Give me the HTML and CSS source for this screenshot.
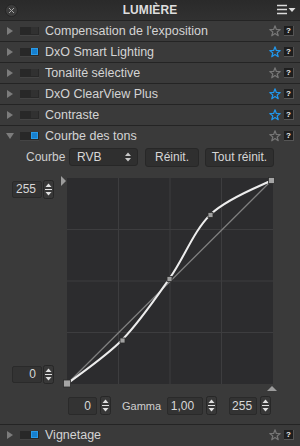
FILE: index.html
```html
<!DOCTYPE html>
<html lang="fr">
<head>
    <meta charset="UTF-8">
    <title>Lumière</title>
    <link rel="stylesheet" href="styles.css">
</head>
<body>
    <svg class="defs" width="0" height="0">
        <symbol id="star" viewBox="0 0 12 12">
            <polygon points="6,0.8 7.35,4.44 11.23,4.6 8.19,7.01 9.23,10.75 6,8.6 2.77,10.75 3.81,7.01 0.77,4.6 4.65,4.44" fill="none" stroke="currentColor" stroke-width="1.2" stroke-linejoin="round"/>
        </symbol>
        <symbol id="step" viewBox="0 0 11 19">
            <rect x="0.5" y="0.5" width="10" height="18" rx="2" fill="#383838" stroke="#272727"/>
            <polygon points="5.5,3.5 8.5,7 2.5,7" fill="#e0e0e0"/>
            <line x1="2" y1="9.5" x2="9" y2="9.5" stroke="#e0e0e0"/>
            <polygon points="2.5,12 8.5,12 5.5,15.5" fill="#e0e0e0"/>
        </symbol>
    </svg>

    <div class="panel">
        <div class="title-bar">
            <span class="close">
                <svg width="13" height="13" viewBox="0 0 13 13">
                    <circle cx="6.5" cy="6.5" r="6" fill="#3c3c3c" stroke="#262626"/>
                    <path d="M4 4 L9 9 M9 4 L4 9" stroke="#a8a8a8" stroke-width="1"/>
                </svg>
            </span>
            <h1>LUMIÈRE</h1>
            <span class="menu">
                <svg width="19" height="12" viewBox="0 0 19 12">
                    <path d="M0 1.5 H10 M0 5.5 H10 M0 9.5 H10" stroke="#dcdcdc" stroke-width="1.3"/>
                    <polygon points="11.5,4 18.5,4 15,8" fill="#dcdcdc"/>
                </svg>
            </span>
        </div>

        <div class="row">
            <span class="arrow"></span>
            <span class="toggle"><i></i></span>
            <span class="label">Compensation de l'exposition</span>
            <svg class="star"><use href="#star"/></svg>
            <span class="help">?</span>
        </div>
        <div class="row">
            <span class="arrow"></span>
            <span class="toggle on"><i></i></span>
            <span class="label">DxO Smart Lighting</span>
            <svg class="star fav"><use href="#star"/></svg>
            <span class="help">?</span>
        </div>
        <div class="row">
            <span class="arrow"></span>
            <span class="toggle"><i></i></span>
            <span class="label">Tonalité sélective</span>
            <svg class="star"><use href="#star"/></svg>
            <span class="help">?</span>
        </div>
        <div class="row">
            <span class="arrow"></span>
            <span class="toggle"><i></i></span>
            <span class="label">DxO ClearView Plus</span>
            <svg class="star fav"><use href="#star"/></svg>
            <span class="help">?</span>
        </div>
        <div class="row">
            <span class="arrow"></span>
            <span class="toggle"><i></i></span>
            <span class="label">Contraste</span>
            <svg class="star fav"><use href="#star"/></svg>
            <span class="help">?</span>
        </div>
        <div class="row">
            <span class="arrow open"></span>
            <span class="toggle on"><i></i></span>
            <span class="label">Courbe des tons</span>
            <svg class="star"><use href="#star"/></svg>
            <span class="help">?</span>
        </div>

        <div class="section">
            <div class="controls">
                <span class="ctl-label">Courbe</span>
                <div class="select">
                    <span>RVB</span>
                    <svg width="6" height="10" viewBox="0 0 6 10">
                        <polygon points="3,0.5 6,4 0,4" fill="#c8c8c8"/>
                        <polygon points="0,6 6,6 3,9.5" fill="#c8c8c8"/>
                    </svg>
                </div>
                <button class="btn reset">Réinit.</button>
                <button class="btn reset-all">Tout réinit.</button>
            </div>

            <div class="curve-body">
                <div class="side">
                    <div class="spin">
                        <span class="num">255</span>
                        <svg class="stepper"><use href="#step"/></svg>
                    </div>
                    <div class="spin">
                        <span class="num">0</span>
                        <svg class="stepper"><use href="#step"/></svg>
                    </div>
                </div>
                <div class="graph">
                    <svg class="curve" width="206" height="206" viewBox="0 0 206 206">
                        <path d="M51.5 0 V206 M103 0 V206 M154.5 0 V206 M0 51.5 H206 M0 103 H206 M0 154.5 H206" stroke="#3d3d3f" stroke-width="1"/>
                        <line x1="0" y1="206" x2="204.5" y2="2.5" stroke="#808080" stroke-width="1.2"/>
                        <path d="M0 206 C9.2 198.5 37.9 179.4 55 162 C72.1 144.6 87.8 121.4 102.5 100.5 C117.3 79.6 126.6 52.9 143.5 36.5 C160.4 20.1 193.9 7.8 204.5 2.5" fill="none" stroke="#ededed" stroke-width="2"/>
                        <rect x="53" y="160" width="5" height="5" fill="#a0a0a0" stroke="#2a2a2a" stroke-width="0.8"/>
                        <rect x="100" y="98.5" width="5" height="5" fill="#a0a0a0" stroke="#2a2a2a" stroke-width="0.8"/>
                        <rect x="141" y="34.5" width="5" height="5" fill="#a0a0a0" stroke="#2a2a2a" stroke-width="0.8"/>
                        <rect x="201.5" y="-0.5" width="6" height="6" fill="#a4a4a4" stroke="#2a2a2a" stroke-width="0.8"/>
                        <rect x="-3.5" y="202" width="7" height="7" fill="#a4a4a4" stroke="#2a2a2a" stroke-width="0.8"/>
                    </svg>
                    <span class="mark-left"></span>
                    <span class="mark-bottom"></span>
                </div>
            </div>

            <div class="gamma-row">
                <div class="spin">
                    <span class="num w29">0</span>
                    <svg class="stepper"><use href="#step"/></svg>
                </div>
                <span class="gamma-label">Gamma</span>
                <div class="spin">
                    <span class="num w36">1,00</span>
                    <svg class="stepper"><use href="#step"/></svg>
                </div>
                <div class="spin last">
                    <span class="num w28">255</span>
                    <svg class="stepper"><use href="#step"/></svg>
                </div>
            </div>
        </div>

        <div class="row">
            <span class="arrow"></span>
            <span class="toggle on"><i></i></span>
            <span class="label">Vignetage</span>
            <svg class="star"><use href="#star"/></svg>
            <span class="help">?</span>
        </div>
    </div>
</body>
</html>
```

FILE: styles.css
```css
body {
    margin: 0;
    padding: 0;
    background-color: #3a3a3a;
    font-family: "Liberation Sans", Arial, sans-serif;
    color: #d2d2d2;
}

.defs {
    position: absolute;
}

.panel {
    width: 300px;
    height: 446px;
    background-color: #3a3a3a;
    overflow: hidden;
}

.title-bar {
    height: 20px;
    display: grid;
    grid-template-columns: 1fr auto 1fr;
    align-items: center;
    background: linear-gradient(#2a2a2a, #313131);
}

.title-bar h1 {
    margin: 0;
    font-size: 12px;
    font-weight: bold;
    color: #dedede;
    letter-spacing: 0.1px;
}

.close {
    justify-self: start;
    padding-left: 5px;
    display: flex;
}

.menu {
    justify-self: end;
    padding-right: 4px;
    display: flex;
}

.row {
    height: 20px;
    border-top: 1px solid #242424;
    display: flex;
    align-items: center;
    padding: 0 6px 0 7px;
    background-color: #3a3a3a;
}

.arrow {
    width: 0;
    height: 0;
    border-top: 4px solid transparent;
    border-bottom: 4px solid transparent;
    border-left: 6px solid #7c7c7c;
}

.arrow.open {
    border-left: 4px solid transparent;
    border-right: 4px solid transparent;
    border-top: 6px solid #7c7c7c;
    border-bottom: 0;
    margin-left: -1px;
    margin-right: -1px;
}

.toggle {
    margin-left: 7px;
    width: 19px;
    height: 9px;
    box-sizing: border-box;
    background-color: #282828;
    border-bottom: 1px solid #444;
    display: flex;
    justify-content: flex-end;
    align-items: center;
    padding-right: 1px;
}

.toggle i {
    width: 7px;
    height: 7px;
    background-color: #313131;
}

.toggle.on i {
    background-color: #1680d0;
    box-shadow: inset 0 0 0 1px #2a9be8;
}

.label {
    margin-left: 6px;
    font-size: 12.5px;
    color: #d4d4d4;
    white-space: nowrap;
}

.star {
    margin-left: auto;
    width: 12px;
    height: 12px;
    color: #767676;
}

.star.fav {
    color: #2196ea;
}

.help {
    margin-left: 3px;
    width: 10px;
    height: 10px;
    box-sizing: border-box;
    background-color: #1e1e1e;
    border-right: 1px solid #555;
    border-bottom: 1px solid #555;
    font-size: 8px;
    font-weight: bold;
    line-height: 9px;
    text-align: center;
    color: #f0f0f0;
}

.section {
    height: 278px;
    box-sizing: border-box;
    padding-top: 2px;
}

.controls {
    display: flex;
    align-items: center;
    height: 18px;
    padding-left: 26px;
}

.ctl-label {
    font-size: 12px;
    color: #cfcfcf;
    width: 43px;
}

.select {
    width: 69px;
    height: 18px;
    box-sizing: border-box;
    background-color: #2f2f2f;
    border: 1px solid #272727;
    border-radius: 3px;
    display: flex;
    align-items: center;
    justify-content: space-between;
    padding: 0 6px 0 7px;
    font-size: 12px;
    color: #d8d8d8;
}

.btn {
    height: 19px;
    box-sizing: border-box;
    background-color: #2f2f2f;
    border: 1px solid #272727;
    border-radius: 3px;
    font-family: "Liberation Sans", Arial, sans-serif;
    font-size: 12px;
    color: #d6d6d6;
    padding: 0;
}

.reset {
    margin-left: 7px;
    width: 54px;
}

.reset-all {
    margin-left: 6px;
    width: 69px;
}

.curve-body {
    display: flex;
    margin-top: 12px;
    padding-left: 12px;
}

.side {
    width: 43px;
    margin-right: 12px;
    height: 206px;
    box-sizing: border-box;
    padding-top: 2px;
    display: flex;
    flex-direction: column;
    justify-content: space-between;
}

.spin {
    display: flex;
    align-items: center;
    gap: 1px;
}

.num {
    width: 30px;
    height: 17px;
    box-sizing: border-box;
    background-color: #333;
    border: 1px solid #2a2a2a;
    border-radius: 2px;
    font-size: 12px;
    line-height: 15px;
    text-align: right;
    padding-right: 5px;
    color: #d8d8d8;
}

.stepper {
    width: 11px;
    height: 19px;
}

.graph {
    position: relative;
    width: 206px;
    height: 206px;
    background-color: #2c2c2e;
}

.curve {
    display: block;
    overflow: visible;
}

.mark-left {
    position: absolute;
    left: -6px;
    top: -2px;
    width: 0;
    height: 0;
    border-top: 5px solid transparent;
    border-bottom: 5px solid transparent;
    border-left: 5px solid #9c9c9c;
}

.mark-bottom {
    position: absolute;
    left: 200px;
    top: 208px;
    width: 0;
    height: 0;
    border-left: 5px solid transparent;
    border-right: 5px solid transparent;
    border-bottom: 5px solid #9c9c9c;
}

.gamma-row {
    display: flex;
    align-items: center;
    margin-top: 12px;
    padding-left: 68px;
    height: 19px;
}

.gamma-row .spin {
    gap: 3px;
}

.gamma-row .num {
    height: 18px;
    line-height: 16px;
}

.num.w29 {
    width: 29px;
}

.num.w36 {
    width: 36px;
    padding-right: 8px;
}

.num.w28 {
    width: 28px;
    padding-right: 4px;
}

.gamma-label {
    margin-left: 11px;
    margin-right: 6px;
    font-size: 11px;
    color: #cfcfcf;
}

.spin.last {
    margin-left: 12px;
}
```
